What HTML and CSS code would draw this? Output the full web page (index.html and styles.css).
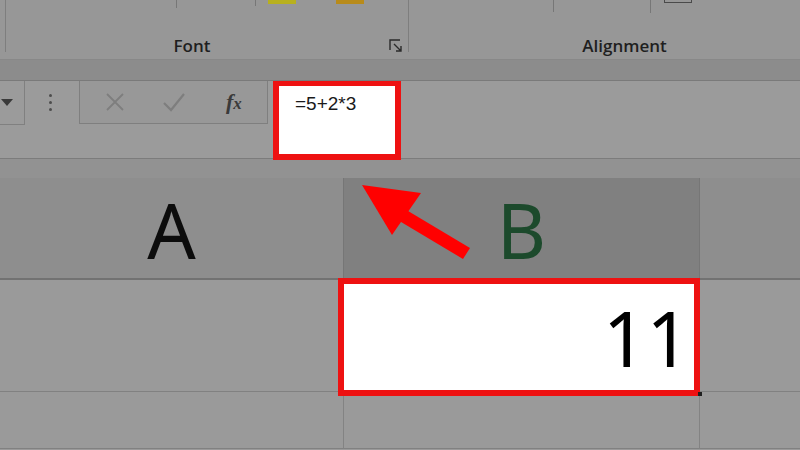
FILE: index.html
```html
<!DOCTYPE html>
<html lang="en">
<head>
  <meta charset="UTF-8">
  <meta name="viewport" content="width=device-width, initial-scale=1.0">
  <title>Excel formula</title>
  <link rel="stylesheet" href="styles.css">
</head>
<body>
  <div class="screen">
    <!-- Ribbon (bottom of Font / Alignment groups) -->
    <div class="ribbon">
      <div class="group group-font">
        <div class="group-top">
          <span class="tick tick-1"></span>
          <span class="tick tick-2"></span>
          <span class="swatch swatch-yellow"></span>
          <span class="swatch swatch-orange"></span>
        </div>
        <div class="group-label">Font</div>
        <svg class="launcher" width="14" height="13" viewBox="0 0 14 13">
          <path d="M1 11V1h10" fill="none" stroke="#2b2b2b" stroke-width="1.4"/>
          <path d="M5 5l7 7M12 7v5H7" fill="none" stroke="#2b2b2b" stroke-width="1.4"/>
        </svg>
      </div>
      <div class="group group-align">
        <div class="group-top">
          <span class="tick tick-3"></span>
          <span class="tick tick-4"></span>
          <span class="box-icon"></span>
        </div>
        <div class="group-label">Alignment</div>
      </div>
    </div>
    <div class="band"></div>

    <!-- Formula bar -->
    <div class="formula-row">
      <div class="name-box">
        <svg width="12" height="7" viewBox="0 0 12 7"><path d="M0 0h12L6 7z" fill="#3a3a3a"/></svg>
      </div>
      <div class="dots"><span></span><span></span><span></span></div>
      <div class="fx-buttons">
        <svg class="btn-icon" width="20" height="20" viewBox="0 0 20 20">
          <path d="M2 2l16 16M18 2L2 18" stroke="#7e7e7e" stroke-width="1.8"/>
        </svg>
        <svg class="btn-icon" width="22" height="20" viewBox="0 0 22 20">
          <path d="M1 11l7 7L21 2" fill="none" stroke="#7e7e7e" stroke-width="2.2"/>
        </svg>
        <span class="fx"><i>f</i><i class="x">x</i></span>
      </div>
      <div class="formula-input">=5+2*3</div>
    </div>
    <div class="gap"></div>

    <!-- Grid -->
    <div class="sheet">
      <div class="col-head col-a">A</div>
      <div class="col-head col-b">B</div>
      <div class="col-head col-c"></div>

      <div class="cell col-a"></div>
      <div class="cell col-b cell-active">
        <div class="highlight">11</div>
        <span class="fill-handle"></span>
      </div>
      <div class="cell col-c"></div>

      <div class="cell col-a"></div>
      <div class="cell col-b"></div>
      <div class="cell col-c"></div>
    </div>

    <svg class="arrow" width="800" height="450" viewBox="0 0 800 450">
      <polygon points="362,185 421,193 392,235" fill="#ff0000"/>
      <polygon points="398,205 470,248 463,259 391,216" fill="#ff0000"/>
    </svg>
  </div>
</body>
</html>
```

FILE: styles.css
```css
/* Page */
body {
  margin: 0;
  font-family: "Open Sans", "Noto Sans", sans-serif;
  background: #9a9a9a;
}
.screen {
  position: relative;
  width: 800px;
  height: 450px;
  overflow: hidden;
}

/* Ribbon */
.ribbon {
  display: flex;
  height: 59px;
  background: #979797;
  border-bottom: 1px solid #888;
}
.group {
  position: relative;
  height: 52px;
}
.group-font {
  width: 402px;
  margin-left: 5px;
  border-left: 1px solid #7e7e7e;
  border-right: 1px solid #7e7e7e;
}
.group-align {
  flex: 1;
}
.group-top {
  display: flex;
  align-items: flex-start;
  height: 20px;
}
.tick {
  width: 1px;
  background: #777;
}
.tick-1 { height: 8px; margin-left: 170px; }
.tick-2 { height: 6px; margin-left: 78px; }
.tick-3 { height: 12px; margin-left: 144px; }
.tick-4 { height: 13px; margin-left: 96px; }
.swatch {
  width: 28px;
  height: 4px;
}
.swatch-yellow { background: #b8b01e; margin-left: 12px; }
.swatch-orange { background: #b88b1b; margin-left: 40px; }
.box-icon {
  width: 26px;
  height: 2px;
  margin-left: 13px;
  border: 1px solid #4a4a4a;
  border-top: none;
}
.group-label {
  text-align: center;
  font-size: 17px;
  font-weight: 600;
  color: #1f1f1f;
  line-height: 20px;
  margin-top: 16px;
}
.group-font .group-label { margin-left: -30px; }
.group-align .group-label { margin-left: 40px; }
.launcher {
  position: absolute;
  right: 5px;
  bottom: 0;
}
.band {
  height: 20px;
  background: #8c8c8c;
  border-bottom: 1px solid #7a7a7a;
}

/* Formula bar */
.formula-row {
  display: flex;
  align-items: flex-start;
  height: 77px;
  background: #9b9b9b;
  border-bottom: 1px solid #7c7c7c;
}
.name-box {
  width: 24px;
  height: 43px;
  border-right: 1px solid #808080;
  border-bottom: 1px solid #808080;
  display: flex;
  align-items: center;
}
.name-box svg {
  margin-left: 1px;
}
.dots {
  display: flex;
  flex-direction: column;
  gap: 4px;
  margin: 13px 0 0 24px;
}
.dots span {
  width: 3px;
  height: 3px;
  border-radius: 50%;
  background: #4d4d4d;
}
.fx-buttons {
  display: flex;
  align-items: center;
  width: 187px;
  height: 42px;
  margin-left: 27px;
  border: 1px solid #7f7f7f;
  border-top: none;
  background: #989898;
}
.btn-icon:first-child { margin-left: 25px; }
.btn-icon:nth-child(2) { margin-left: 38px; }
.fx {
  margin-left: 41px;
  font-family: "Liberation Serif", serif;
  font-size: 22px;
  color: #3a3a3a;
  font-weight: bold;
}
.fx .x {
  font-size: 17px;
}
.formula-input {
  width: 100px;
  height: 68px;
  margin-left: 5px;
  border: 6px solid #ee1111;
  border-top-width: 5px;
  background: #fff;
  padding: 0 0 0 16px;
  font-family: "Liberation Sans", Arial, sans-serif;
  font-size: 19px;
  line-height: 36px;
  color: #1a1a1a;
}
.gap {
  height: 19px;
  background: #929292;
}

/* Grid */
.sheet {
  display: grid;
  grid-template-columns: 343px 357px 100px;
  grid-template-rows: 102px 112px 57px;
}
.col-head {
  display: flex;
  align-items: center;
  justify-content: center;
  background: #8e8e8e;
  border-bottom: 2px solid #727272;
  font-family: "Noto Sans", sans-serif;
  font-size: 76px;
  color: #0c0c0c;
  line-height: 1;
  padding-top: 4px;
}
.col-head.col-b {
  background: #808080;
  color: #1c4a2c;
  border-left: 1px solid #767676;
  border-right: 1px solid #767676;
}
.cell {
  background: #9a9a9a;
  border-bottom: 1px solid #818181;
}
.cell.col-b {
  border-left: 1px solid #838383;
  border-right: 1px solid #838383;
}
.cell-active {
  position: relative;
}
.highlight {
  position: absolute;
  left: -6px;
  top: -2px;
  right: -1px;
  bottom: -5px;
  border: 6px solid #ee1111;
  background: #fff;
  text-align: right;
  padding-right: 4px;
  font-family: "Noto Sans", sans-serif;
  font-size: 76px;
  line-height: 108px;
  color: #000;
}
.fill-handle {
  position: absolute;
  right: -3px;
  bottom: -5px;
  width: 4px;
  height: 4px;
  background: #1f1f1f;
}

/* Annotation arrow */
.arrow {
  position: absolute;
  left: 0;
  top: 0;
}
```
